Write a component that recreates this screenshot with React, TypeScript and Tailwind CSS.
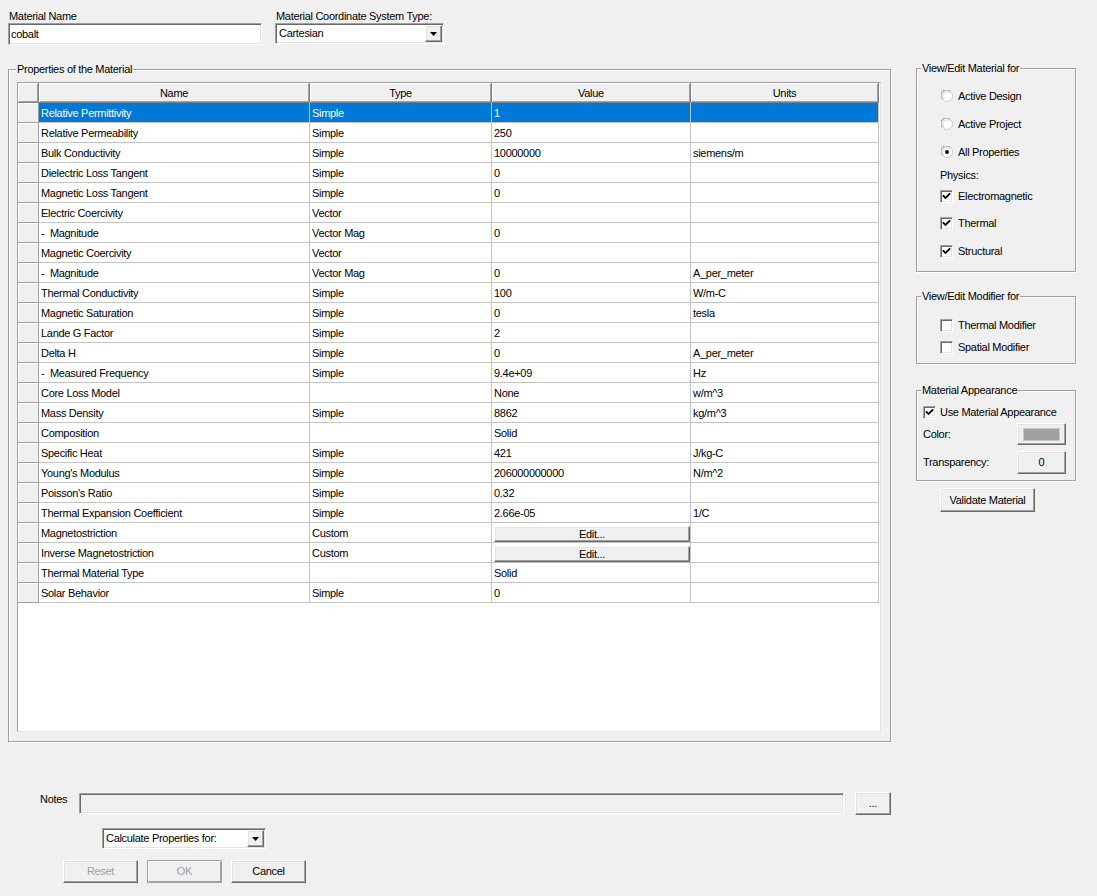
import React from "react";

const SUNKEN =
  "border border-t-[#a0a0a0] border-l-[#a0a0a0] border-r-white border-b-white shadow-[inset_1px_1px_0_#696969,inset_-1px_-1px_0_#e3e3e3]";
const RAISED =
  "border border-t-white border-l-white border-r-[#696969] border-b-[#696969] shadow-[inset_-1px_-1px_0_#a0a0a0,inset_1px_1px_0_#e3e3e3]";

type Row = { name: string; type: string; value: string; units: string; edit?: boolean };

const ROWS: Row[] = [
  { name: "Relative Permittivity", type: "Simple", value: "1", units: "" },
  { name: "Relative Permeability", type: "Simple", value: "250", units: "" },
  { name: "Bulk Conductivity", type: "Simple", value: "10000000", units: "siemens/m" },
  { name: "Dielectric Loss Tangent", type: "Simple", value: "0", units: "" },
  { name: "Magnetic Loss Tangent", type: "Simple", value: "0", units: "" },
  { name: "Electric Coercivity", type: "Vector", value: "", units: "" },
  { name: "-  Magnitude", type: "Vector Mag", value: "0", units: "" },
  { name: "Magnetic Coercivity", type: "Vector", value: "", units: "" },
  { name: "-  Magnitude", type: "Vector Mag", value: "0", units: "A_per_meter" },
  { name: "Thermal Conductivity", type: "Simple", value: "100", units: "W/m-C" },
  { name: "Magnetic Saturation", type: "Simple", value: "0", units: "tesla" },
  { name: "Lande G Factor", type: "Simple", value: "2", units: "" },
  { name: "Delta H", type: "Simple", value: "0", units: "A_per_meter" },
  { name: "-  Measured Frequency", type: "Simple", value: "9.4e+09", units: "Hz" },
  { name: "Core Loss Model", type: "", value: "None", units: "w/m^3" },
  { name: "Mass Density", type: "Simple", value: "8862", units: "kg/m^3" },
  { name: "Composition", type: "", value: "Solid", units: "" },
  { name: "Specific Heat", type: "Simple", value: "421", units: "J/kg-C" },
  { name: "Young's Modulus", type: "Simple", value: "206000000000", units: "N/m^2" },
  { name: "Poisson's Ratio", type: "Simple", value: "0.32", units: "" },
  { name: "Thermal Expansion Coefficient", type: "Simple", value: "2.66e-05", units: "1/C" },
  { name: "Magnetostriction", type: "Custom", value: "", units: "", edit: true },
  { name: "Inverse Magnetostriction", type: "Custom", value: "", units: "", edit: true },
  { name: "Thermal Material Type", type: "", value: "Solid", units: "" },
  { name: "Solar Behavior", type: "Simple", value: "0", units: "" },
];

const COLW = ["w-[271px]", "w-[182px]", "w-[199px]", "w-[188px]"];

function Arrow() {
  return (
    <div className={"flex h-[17px] w-[17px] shrink-0 items-center justify-center bg-[#f0f0f0] " + RAISED}>
      <svg width="7" height="4" viewBox="0 0 7 4">
        <polygon points="0,0 7,0 3.5,4" fill="#000" />
      </svg>
    </div>
  );
}

function Check({ checked }: { checked?: boolean }) {
  return (
    <div className={"relative h-[13px] w-[13px] shrink-0 bg-white " + SUNKEN}>
      {checked && (
        <svg className="absolute left-[1px] top-[1px]" width="9" height="9" viewBox="0 0 9 9">
          <polyline points="1.5,4 3.5,6 7.5,2" fill="none" stroke="#000" strokeWidth="1.8" strokeLinecap="square" />
        </svg>
      )}
    </div>
  );
}

function Radio({ checked }: { checked?: boolean }) {
  return (
    <svg width="12" height="12" viewBox="0 0 12 12" className="shrink-0">
      <circle cx="6" cy="6" r="5.5" fill="#fff" stroke="#c8c8c8" strokeWidth="1" />
      <path d="M1.3 9.2 A5.5 5.5 0 0 1 9.2 1.3" fill="none" stroke="#9a9a9a" strokeWidth="1" />
      <path d="M2.4 8.3 A4.4 4.4 0 0 1 8.3 2.4" fill="none" stroke="#d8d8d8" strokeWidth="1" />
      {checked && <circle cx="6" cy="6" r="2" fill="#000" />}
    </svg>
  );
}

function Group({
  label,
  className,
  labelClass,
  children,
}: {
  label: string;
  className: string;
  labelClass?: string;
  children: React.ReactNode;
}) {
  return (
    <div className={"relative border border-[#a0a0a0] shadow-[inset_1px_1px_0_#fff,1px_1px_0_#fff] " + className}>
      <span className={"absolute top-[-7px] bg-[#f0f0f0] px-[1px] leading-[13px] " + (labelClass ?? "left-[4px]")}>
        {label}
      </span>
      {children}
    </div>
  );
}

export default function App() {
  return (
    <div className="h-[896px] w-[1097px] overflow-hidden bg-[#f0f0f0] font-['Liberation_Sans',Arial,sans-serif] text-[11px] leading-[13px] tracking-[-0.3px] text-black">
      {/* top row */}
      <div className="flex pl-[8px] pt-[10px]">
        <div className="flex w-[254px] flex-col">
          <div className="h-[13px] pl-[1px]">Material Name</div>
          <div className={"flex h-[22px] items-center bg-white pl-[2px] " + SUNKEN}>cobalt</div>
        </div>
        <div className="ml-[13px] flex w-[169px] flex-col">
          <div className="h-[13px] pl-[1px]">Material Coordinate System Type:</div>
          <div className={"flex h-[21px] items-center justify-between bg-white pl-[3px] pr-[1px] " + SUNKEN}>
            <span>Cartesian</span>
            <Arrow />
          </div>
        </div>
      </div>

      {/* main */}
      <div className="mt-[23px] flex items-start">
        <Group
          label="Properties of the Material"
          labelClass="left-[7px]"
          className="ml-[8px] mt-[1px] h-[673px] w-[883px] pl-[8px] pt-[12px]"
        >
          <div className="h-[650px] w-[864px] border border-t-[#a0a0a0] border-l-[#a0a0a0] border-r-[#e3e3e3] border-b-[#e3e3e3] bg-white">
            {/* header */}
            <div className="flex h-[20px]">
              <div className="h-[20px] w-[21px] border-r border-b border-[#808080] bg-[#f0f0f0] shadow-[inset_1px_1px_0_#fff,inset_-1px_-1px_0_#a0a0a0]" />
              {["Name", "Type", "Value", "Units"].map((h, i) => (
                <div
                  key={h}
                  className={
                    COLW[i] +
                    " flex h-[20px] items-center justify-center border-r border-b border-[#808080] bg-[#f0f0f0] pt-[1px] shadow-[inset_1px_1px_0_#fff,inset_-1px_-1px_0_#a0a0a0]"
                  }
                >
                  {h}
                </div>
              ))}
            </div>
            {ROWS.map((r, idx) => {
              const sel = idx === 0;
              const cellBase =
                "flex h-[20px] items-center border-r border-b border-[#c3c3c3] pl-[2px] pt-[2px] whitespace-pre " +
                (sel ? "bg-[#0078d7] text-white" : "");
              return (
                <div key={idx} className="flex h-[20px]">
                  <div className="h-[20px] w-[21px] border-r border-b border-[#a0a0a0] bg-[#f0f0f0] shadow-[inset_1px_1px_0_#fff]" />
                  <div className={COLW[0] + " " + cellBase}>{r.name}</div>
                  <div className={COLW[1] + " " + cellBase}>{r.type}</div>
                  {r.edit ? (
                    <div className={COLW[2] + " flex h-[20px] items-start border-r border-b border-[#c3c3c3] pl-[2px] pt-[3px]"}>
                      <div className={"flex h-[16px] w-[196px] items-center justify-center bg-[#f0f0f0] " + RAISED}>Edit...</div>
                    </div>
                  ) : (
                    <div className={COLW[2] + " " + cellBase}>{r.value}</div>
                  )}
                  <div className={COLW[3] + " " + cellBase}>{r.units}</div>
                </div>
              );
            })}
          </div>
        </Group>

        {/* right column */}
        <div className="ml-[25px] flex w-[160px] flex-col">
          <Group label="View/Edit Material for" className="h-[204px] w-[160px] pl-[24px] pt-[13px]">
            <div className="flex h-[28px] items-center">
              <Radio />
              <span className="ml-[5px]">Active Design</span>
            </div>
            <div className="flex h-[28px] items-center">
              <Radio />
              <span className="ml-[5px]">Active Project</span>
            </div>
            <div className="flex h-[28px] items-center">
              <Radio checked />
              <span className="ml-[5px]">All Properties</span>
            </div>
            <div className="ml-[-1px] flex h-[18px] items-center">Physics:</div>
            <div className="ml-[-1px] flex h-[24px] items-center">
              <Check checked />
              <span className="ml-[5px]">Electromagnetic</span>
            </div>
            <div className="ml-[-1px] flex h-[30px] items-center">
              <Check checked />
              <span className="ml-[5px]">Thermal</span>
            </div>
            <div className="ml-[-1px] flex h-[26px] items-center">
              <Check checked />
              <span className="ml-[5px]">Structural</span>
            </div>
          </Group>

          <Group label="View/Edit Modifier for" className="mt-[24px] h-[68px] w-[160px] pl-[23px] pt-[17px]">
            <div className="flex h-[22px] items-center">
              <Check />
              <span className="ml-[5px]">Thermal Modifier</span>
            </div>
            <div className="flex h-[22px] items-center">
              <Check />
              <span className="ml-[5px]">Spatial Modifier</span>
            </div>
          </Group>

          <Group label="Material Appearance" className="mt-[26px] h-[91px] w-[160px] pl-[6px] pr-[9px] pt-[11px]">
            <div className="flex h-[20px] items-center">
              <Check checked />
              <span className="ml-[4px]">Use Material Appearance</span>
            </div>
            <div className="mt-[1px] flex h-[22px] items-center justify-between">
              <span>Color:</span>
              <div className={"flex h-[22px] w-[49px] items-center justify-center bg-[#f0f0f0] " + RAISED}>
                <div className="h-[13px] w-[37px] border border-[#c8c8c8] bg-[#a0a0a0]" />
              </div>
            </div>
            <div className="mt-[6px] flex h-[23px] items-center justify-between">
              <span>Transparency:</span>
              <div className={"flex h-[23px] w-[49px] items-center justify-center bg-[#f0f0f0] " + RAISED}>0</div>
            </div>
          </Group>

          <div className={"ml-[24px] mt-[7px] flex h-[24px] w-[95px] items-center justify-center bg-[#f0f0f0] " + RAISED}>
            Validate Material
          </div>
        </div>
      </div>

      {/* bottom */}
      <div className="mt-[50px] flex h-[23px] items-start pl-[40px]">
        <div className="flex h-[14px] w-[39px] items-center">Notes</div>
        <div className={"mt-[1px] h-[21px] w-[765px] bg-[#f0f0f0] " + SUNKEN} />
        <div className={"ml-[11px] flex h-[23px] w-[36px] items-center justify-center bg-[#f0f0f0] " + RAISED}>...</div>
      </div>

      <div className="mt-[13px] pl-[102px]">
        <div className={"flex h-[21px] w-[164px] items-center justify-between bg-white pl-[3px] pr-[1px] " + SUNKEN}>
          <span>Calculate Properties for:</span>
          <Arrow />
        </div>
      </div>

      <div className="mt-[11px] flex gap-[9px] pl-[63px]">
        <div className={"flex h-[23px] w-[75px] items-center justify-center bg-[#f0f0f0] text-[#a0a0a0] " + RAISED}>Reset</div>
        <div className="flex h-[23px] w-[75px] items-center justify-center border border-[#a0a0a0] bg-[#f0f0f0] text-[#a0a0a0] shadow-[inset_1px_1px_0_#fff,inset_-1px_-1px_0_#a0a0a0]">
          OK
        </div>
        <div className={"flex h-[23px] w-[75px] items-center justify-center bg-[#f0f0f0] " + RAISED}>Cancel</div>
      </div>
    </div>
  );
}
